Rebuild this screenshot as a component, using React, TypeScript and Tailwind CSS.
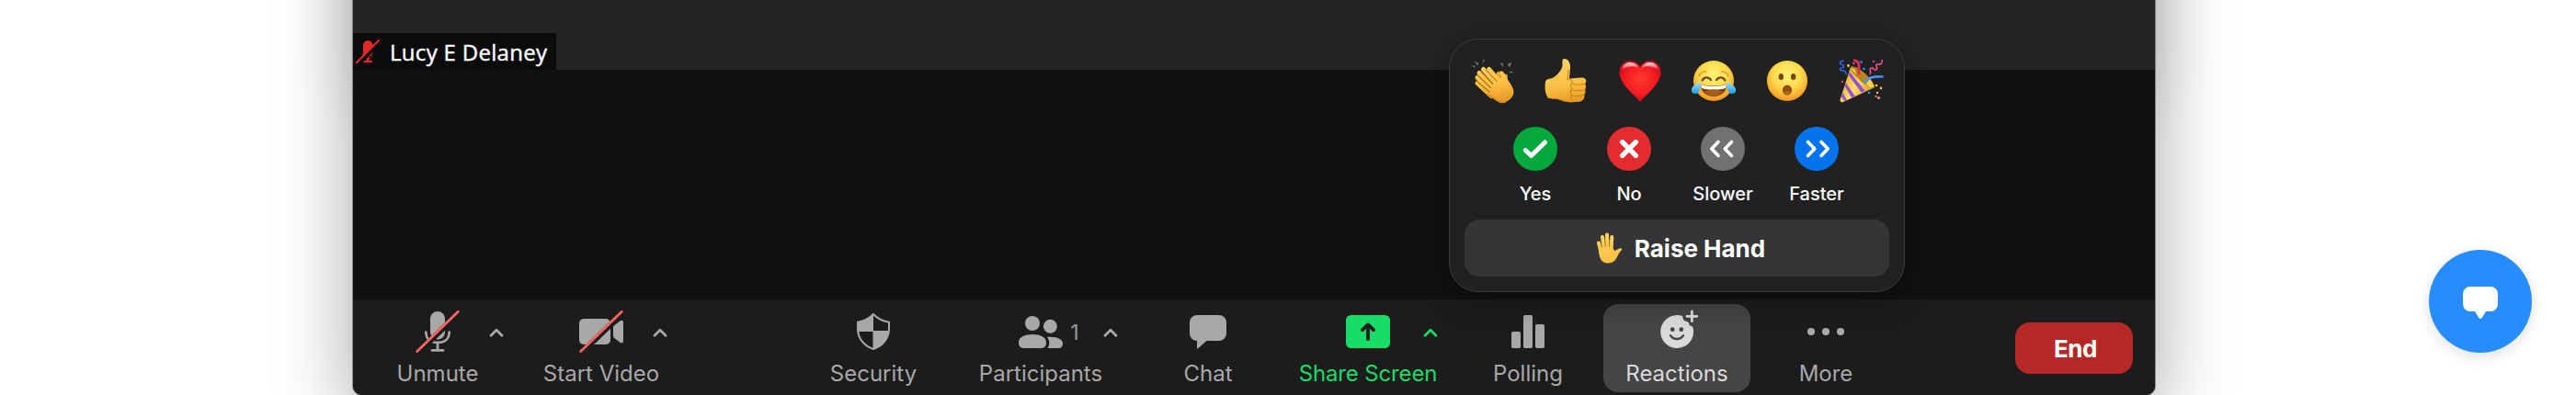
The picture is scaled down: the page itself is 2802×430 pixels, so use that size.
import type { ReactNode } from "react";

const GRAY = "#a8a8a8";

function Slash({ gap }: { gap: string }) {
  return (
    <>
      <path d="M9 49.5 54 6" stroke={gap} strokeWidth="6" />
      <path d="M7.7 48.6 52.3 5.2" stroke="#ff6363" strokeWidth="2.8" strokeLinecap="round" />
    </>
  );
}

function Icon({ children }: { children: ReactNode }) {
  return (
    <svg width="60" height="56" viewBox="0 0 60 56" fill="none" className="block">
      {children}
    </svg>
  );
}

const MicIcon = () => (
  <Icon>
    <rect x="22" y="5" width="16" height="30.5" rx="8" fill={GRAY} />
    <path d="M17.3 27.5C17.3 35 22.3 39 30 39s12.7-4 12.7-11.5" stroke={GRAY} strokeWidth="2.7" strokeLinecap="round" />
    <path d="M30 39v8.4M24 47.4h12" stroke={GRAY} strokeWidth="2.8" strokeLinecap="round" />
    <Slash gap="#1c1c1c" />
  </Icon>
);

const VideoIcon = () => (
  <Icon>
    <rect x="6" y="13" width="34" height="28" rx="5" fill={GRAY} />
    <path d="M43 22.6c0-1 .4-1.8 1.1-2.4l6.6-5c1.4-1 3.3-.3 3.3 1.4v21c0 1.7-1.9 2.4-3.3 1.4l-6.6-5c-.7-.6-1.1-1.4-1.1-2.4Z" fill={GRAY} />
    <Slash gap="#1c1c1c" />
  </Icon>
);

const ShieldIcon = () => (
  <Icon>
    <path d="M30 8c4.5 4.8 10.5 7.7 17 8.700v7C47 34 40.5 42.500 30 46 19.500 42.500 13 34 13 23.700v-7C19.500 15.700 25.500 12.800 30 8Z" stroke={GRAY} strokeWidth="2" />
    <path d="M30 8v18.500H13.200L13 17c6.500-1 12.500-4.200 17-9ZM30 26.500h16.800C46.200 36 40 43 30 46Z" fill={GRAY} />
    <path d="M30 26.500h17M30 26v20M13 26.500h17" stroke={GRAY} strokeWidth="1" />
  </Icon>
);

const PeopleIcon = () => (
  <Icon>
    <circle cx="21" cy="18" r="8" fill={GRAY} />
    <path d="M6 38.500C6 33 12.500 30 21 30s15 3 15 8.500c0 4.500-2 6.500-5.500 6.500h-19C8 45 6 43 6 38.500Z" fill={GRAY} />
    <circle cx="40.400" cy="21.300" r="7.500" fill={GRAY} />
    <path d="M37 32.900c9.500-1 17 1.800 17 7.100 0 3.500-1.800 5-4.800 5H37.500c2.700-4.200 2.300-8.500-.5-12.100Z" fill={GRAY} />
  </Icon>
);

const ChatIcon = () => (
  <Icon>
    <path d="M18 9h24a8 8 0 0 1 8 8v12a8 8 0 0 1-8 8H28.500l-9 8.100c-.7.600-1.500.2-1.500-.6V37a8 8 0 0 1-8-8V17a8 8 0 0 1 8-8Z" fill={GRAY} />
  </Icon>
);

const ShareIcon = () => (
  <Icon>
    <rect x="6" y="9" width="48" height="36" rx="5.500" fill="#17dc68" />
    <path d="M30 35V20M24 25.200l6-5.800 6 5.800" stroke="#1c1c1c" strokeWidth="3.800" strokeLinecap="round" strokeLinejoin="round" />
  </Icon>
);

const PollIcon = () => (
  <Icon>
    <rect x="12" y="27" width="10" height="18" rx="1.800" fill={GRAY} />
    <rect x="25" y="9" width="10" height="36" rx="1.800" fill={GRAY} />
    <rect x="38" y="19" width="10" height="26" rx="1.800" fill={GRAY} />
  </Icon>
);

const ReactionIcon = () => (
  <Icon>
    <path d="M36 10A18 18 0 1 0 47.600 22.600C46 20 44.500 21.500 43.500 19.500 43.300 17 42 15.800 39 15.500 36.500 14.500 36.800 12.500 36 10Z" fill="#dadada" />
    <path d="M46.400 4.800v11M40.900 10.300h11" stroke="#dadada" strokeWidth="2.800" strokeLinecap="round" />
    <circle cx="25.200" cy="24.700" r="2.400" fill="#454545" />
    <circle cx="34.800" cy="24.700" r="2.400" fill="#454545" />
    <path d="M23 31.200c3.500 5 10.500 5 14 0" stroke="#454545" strokeWidth="2.400" strokeLinecap="round" />
  </Icon>
);

const MoreIcon = () => (
  <Icon>
    <circle cx="14" cy="27" r="4.100" fill={GRAY} />
    <circle cx="30" cy="27" r="4.100" fill={GRAY} />
    <circle cx="46" cy="27" r="4.100" fill={GRAY} />
  </Icon>
);

const Chevron = ({ color = GRAY }: { color?: string }) => (
  <svg width="16" height="12" viewBox="0 0 16 12" fill="none">
    <path d="M2 9.300 8 3.200l6 6.100" stroke={color} strokeWidth="2.800" strokeLinecap="round" strokeLinejoin="round" />
  </svg>
);

function ToolButton({
  icon,
  label,
  side,
  className = "",
  labelClass = "",
}: {
  icon: ReactNode;
  label: string;
  side?: ReactNode;
  className?: string;
  labelClass?: string;
}) {
  return (
    <button
      className={`mt-[5px] grid h-24 shrink-0 grid-cols-[1fr_60px_1fr] grid-rows-[60px_36px] ${className || "w-40 text-[#a8a8a8]"}`}
    >
      <span />
      <span className="pt-[3px]">{icon}</span>
      <span className="flex h-[59px] items-center pt-[3px]">{side}</span>
      <span className={`col-span-3 flex justify-center whitespace-nowrap text-[24px] leading-[32px] ${labelClass}`}>
        {label}
      </span>
    </button>
  );
}

/* ---------- emoji ---------- */

function Emoji({ children }: { children: ReactNode }) {
  return (
    <svg width="48" height="48" viewBox="0 0 48 48" fill="none" className="block overflow-visible">
      {children}
    </svg>
  );
}

const Clap = () => (
  <Emoji>
    <g fill="#777">
      <path d="m3.500 2.500 5 2.500-1 2.500ZM.3 7.500l4.200.2-.5 2ZM13.500.500l1.500 1-2.500 4Z" />
      <path d="m44 3.500-1.500 5.500-3-2.500ZM45.200 13.500v2l-4.500-1ZM31.800 4.500l3.200.5-.5 4Z" />
    </g>
    <path d="M28 15c2-2 4-.5 4.500 2l1 4c2-4 5-5.500 6-3.500 1 2-.5 5 0 8 .8 5 7 9 6.500 13.500L40 46l-16-14Z" fill="#efa42d" />
    <path d="M28 15c2-2 4-.5 4.500 2l1 5 4 6" stroke="#c17a18" strokeWidth=".8" />
    <g stroke="url(#skin)" strokeWidth="5" strokeLinecap="round">
      <path d="m19.500 11.500 15 17" />
      <path d="m13.500 11.500 18 20" />
      <path d="m9 15.500 19 20" />
      <path d="m7 20.500 18 18" />
      <path d="m7 26.500 15 14" />
    </g>
    <path d="m17 28 16-7c.5-3-3-5-1.500-7 1.500-1.800 4.500.5 6 4 2.500 6 9.500 13 9 19-.3 4-5 9-10 10-6 1-12-4-18-9Z" fill="url(#skin)" />
    <path d="m16.500 12 11.500 12.500M11 14l13 13.500M7.500 18l14 13.500M6 24l14 12" stroke="#b06c14" strokeWidth="1.100" strokeLinecap="round" />
    <path d="m17.500 38 10 7c4 3 8 3 11 1.500" stroke="#d58a1e" strokeWidth="1.500" />
  </Emoji>
);

const ThumbsUp = () => (
  <Emoji>
    <path
      d="M1 25c1-3 3-3 6-3.500 5-1 12-9 12.500-14C19.800 3 18.500 0 21.500 0c4.500 0 7 5 6.500 10.500L27 21c0 2 15-2.500 17.500 1 1.200 1.500 1 4-.5 5.500 1.500 2 1.300 4.500 0 6 1 2 .8 4-.8 5.300.8 3-.2 5.500-2.200 6.700-2 1.800-7 1.700-12 1.500-6-.2-11.500-3.500-16-3.500-5 0-8.500 0-10-2.500-2.500-4-2.800-11-2-16Z"
      fill="url(#skin)"
    />
    <path d="M31 27.500c4.500 1 9 1 13-.2M30.500 34c4 1 9.500.8 13.500-.3M30 40c4 .9 9.500.6 13-.8M26 22c2 .5 4 1.500 4.500 4-2.500 1-2.800 4-.5 6.500-2 1.500-2 4.500-.3 6.500-1.500 1.500-1 4.500.3 6.500M26 12l-1 11" stroke="#c98520" strokeWidth="1.100" strokeLinecap="round" />
    <path d="M3 42c5 2 8 0 13 2s10 4 22 2" stroke="#e2951f" strokeWidth="1.200" />
  </Emoji>
);

const Heart = () => (
  <Emoji>
    <path d="M24 47C18 39 1.500 28 1.500 14.500 1.500 7 7 2.300 13 2.300c5 0 9 2.700 11 7.200 2-4.500 6-7.200 11-7.200 6 0 11.500 4.700 11.500 12.200C46.500 28 30 39 24 47Z" fill="url(#heart)" />
    <path d="M4 12C5 6.500 9 4 13 4c4 0 7.500 2 9 5.500-4-2-12-2-18 2.500ZM44 12c-1-5.500-5-8-9-8-4 0-7.500 2-9 5.500 4-2 12-2 18 2.500Z" fill="url(#shine)" />
  </Emoji>
);

const Joy = () => (
  <Emoji>
    <circle cx="24" cy="24" r="22" fill="url(#face)" />
    <path d="M8 19c1-3.500 4.500-5.500 8-5M40 19c-1-3.500-4.500-5.500-8-5" stroke="#d1922a" strokeWidth="1.300" strokeLinecap="round" />
    <path d="M11.500 23.500c2.500-4 7-4 9.500-.3M27 23.200c2.500-3.700 7-3.700 9.500.3" stroke="#7b4510" strokeWidth="2.200" strokeLinecap="round" />
    <path d="M9.500 27.500c9 2.500 20 2.500 29 0C38.500 35.500 32.500 41 24 41S9.500 35.500 9.500 27.500Z" fill="#79420f" />
    <path d="M10 28c9 2.500 19 2.500 28 0l-.8 4c-8 2-18.500 2-26.400 0Z" fill="#fff" />
    <path d="M14 36c5-3 15-3 20 0-5 6-15 6-20 0Z" fill="#a85b18" />
    <path d="M9 24.500c1 5 .8 13.500-5 13.500-3.500 0-5-3-3.700-6C1.500 29 6 27.500 9 24.500ZM39 24.500c-1 5-.8 13.500 5 13.500 3.500 0 5-3 3.700-6C46.500 29 42 27.500 39 24.500Z" fill="url(#tear)" />
  </Emoji>
);

const Wow = () => (
  <Emoji>
    <circle cx="24" cy="24" r="22" fill="url(#face)" />
    <ellipse cx="17.300" cy="19.500" rx="2.700" ry="3.500" fill="#7b4510" />
    <ellipse cx="30.700" cy="19.500" rx="2.700" ry="3.500" fill="#7b4510" />
    <ellipse cx="24" cy="34" rx="5" ry="5.600" fill="#8d4d10" />
    <path d="M20.500 36.500c1.500-2 5.500-2 7 0-1.500 3-5.500 3-7 0Z" fill="#b4691d" />
  </Emoji>
);

const Party = () => (
  <Emoji>
    <path d="M13 9c2-2 9 1 16 7.500 7 6.500 11 13 9.500 15L5 47c-2 1-4-.8-3.300-3Z" fill="url(#cone)" />
    <path d="M13 9c2-2 9 1 16 7.500s11 13 9.500 15c-2 1.500-9-2-16-8.500S11.500 11 13 9Z" fill="#b98518" />
    <path d="m10.800 18 14 18.800 4-1.900L12 14.200ZM6.700 30l7.300 12.300 3.700-1.700L7.900 26.300ZM2.900 41l3.500 5.200 2.600-1.200-4.700-8.400Z" fill="#9950d8" />
    <path d="m12.500 10 5 1.500 2 5.500-5-5ZM34 22l4.500 8-4 1.500-5-4Z" fill="#f7d458" />
    <path d="M16 2c4-1 6.500 3 6 7.500-.2 3-.2 5 0 8" stroke="#e62d5f" strokeWidth="2.800" />
    <path d="M28 25c5-5 10-6 19.500-5.500" stroke="#4792ff" strokeWidth="2.700" strokeLinecap="round" />
    <path d="M5.500 2C1 2 0 6 4 6.500c2 .4 2.500 3-1 3.700C0 11 2 13.500 5 13s3 2.500 3.500 4.500" stroke="#2b6cf0" strokeWidth="1.500" />
    <path d="M47 1c1 3.500-1 5.500-4 5-2.500-.3-2.800 1.500-1.500 3.500 1.300 2-2 3.500-3.500 1.500-2-2.500-4.500-.5-3.500 2 .5 1.500.2 3-.8 4" stroke="#f05296" strokeWidth="1.600" />
    <g>
      <circle cx="10.500" cy="7.500" r="1.400" fill="#f7d14a" />
      <circle cx="16.500" cy="5" r="1.200" fill="#ec4b8a" />
      <circle cx="24.500" cy="3.500" r="1.300" fill="#3f8cff" />
      <circle cx="27.500" cy="11" r="1.300" fill="#3f8cff" />
      <circle cx="38" cy="3" r="1.200" fill="#ec3d6b" />
      <circle cx="4" cy="25" r="1.200" fill="#ec3d6b" />
      <circle cx="41" cy="29" r="1.300" fill="#f7d14a" />
      <circle cx="46" cy="32" r="1.400" fill="#ffab3a" />
      <circle cx="33" cy="37" r="1.300" fill="#3f8cff" />
      <circle cx="42" cy="37" r="1.300" fill="#ffab3a" />
      <circle cx="40.500" cy="41" r="1.100" fill="#ffab3a" />
      <circle cx="43.500" cy="42.500" r="1.600" fill="#ff7db5" />
    </g>
  </Emoji>
);

const Hand = () => (
  <svg width="30" height="34" viewBox="0 0 30 34" fill="none" className="block">
    <g stroke="url(#skin)" strokeWidth="4" strokeLinecap="round">
      <path d="M3 11.500 5.500 22" />
      <path d="m7 5 2 14" />
      <path d="m12 2.500.5 15" />
      <path d="M17.300 5 16.500 19" />
    </g>
    <path d="M3 17c5-2 11-2 15 0 1 0 1.500 3 2.500 3 1.500-.5 4.500-3.500 7-2.700 1.200.4.800 1.800-.3 2.700-4 3.500-4.700 13.500-13.700 13.500C5 33.500 3 27 3 17Z" fill="url(#skin)" />
    <path d="M5.200 12.500 6.500 17M9.700 8l.5 8M14.700 8v8" stroke="#cc8420" strokeWidth=".8" />
  </svg>
);

const EmojiPaints = () => (
  <svg width="0" height="0" className="absolute">
    <defs>
      <linearGradient id="skin" gradientUnits="userSpaceOnUse" x1="10" y1="0" x2="20" y2="48">
        <stop offset="0" stopColor="#ffd264" />
        <stop offset=".6" stopColor="#fcc246" />
        <stop offset="1" stopColor="#e99a26" />
      </linearGradient>
      <radialGradient id="heart" cx=".5" cy=".45" r=".6">
        <stop offset="0" stopColor="#ff3a2e" />
        <stop offset=".6" stopColor="#f41c20" />
        <stop offset="1" stopColor="#c40a14" />
      </radialGradient>
      <linearGradient id="shine" x1="0" y1="0" x2="0" y2="1">
        <stop offset="0" stopColor="#fff" stopOpacity=".85" />
        <stop offset="1" stopColor="#fff" stopOpacity=".1" />
      </linearGradient>
      <radialGradient id="face" cx=".5" cy=".35" r=".66">
        <stop offset="0" stopColor="#fff27a" />
        <stop offset=".5" stopColor="#ffdc4c" />
        <stop offset=".85" stopColor="#f9ab2e" />
        <stop offset="1" stopColor="#ec8c1c" />
      </radialGradient>
      <linearGradient id="tear" x1="0" y1="0" x2="0" y2="1">
        <stop offset="0" stopColor="#a5e6ff" />
        <stop offset="1" stopColor="#1c9bea" />
      </linearGradient>
      <linearGradient id="cone" x1="0" y1=".3" x2="1" y2=".8">
        <stop offset="0" stopColor="#d9a32c" />
        <stop offset=".45" stopColor="#ffe169" />
        <stop offset="1" stopColor="#c58d1e" />
      </linearGradient>
    </defs>
  </svg>
);

function Feedback({ color, label, labelClass, path, width }: { color: string; label: string; labelClass: string; path: string; width: number }) {
  return (
    <button className="flex w-[102px] flex-col items-center">
      <svg width="48" height="48" viewBox="0 0 48 48" fill="none">
        <circle cx="24" cy="24" r="24" fill={color} />
        <path d={path} stroke="#fff" strokeWidth={width} strokeLinecap="round" strokeLinejoin="round" />
      </svg>
      <span className={`mt-[13px] whitespace-nowrap text-[20px] font-medium leading-[24px] text-white ${labelClass}`}>{label}</span>
    </button>
  );
}

function ReactionsPopup() {
  return (
    <section className="absolute left-[1192px] top-[42px] h-[276px] w-[496px] rounded-[32px] border border-[#3c3c3c] bg-[#212121] pt-[21px] shadow-[0_6px_36px_rgba(0,0,0,0.35)]">
      <div className="flex justify-center gap-8">
        <Clap />
        <ThumbsUp />
        <Heart />
        <Joy />
        <Wow />
        <Party />
      </div>
      <div className="mt-[26px] flex justify-center pr-0.5">
        <Feedback color="#04a83c" label="Yes" labelClass="" path="m13.300 25.500 6.200 6L34.500 17" width={5} />
        <Feedback color="#e22c2d" label="No" labelClass="" path="m16.700 16.700 14.600 14.600m0-14.600L16.700 31.300" width={5.400} />
        <Feedback color="#717171" label="Slower" labelClass="" path="m19 16.500-7.200 7.500 7.200 7.500m14.500-15L26.300 24l7.200 7.500" width={3.600} />
        <Feedback color="#0473ed" label="Faster" labelClass="" path="m14.500 16.500 7.200 7.500-7.200 7.500m14.500-15 7.200 7.500-7.200 7.500" width={3.600} />
      </div>
      <button className="mx-4 mt-4 flex h-[62px] w-[462px] items-center justify-center rounded-2xl bg-[#353535] pl-2">
        <Hand />
        <span className="ml-[12px] whitespace-nowrap pt-px text-[26px] font-bold leading-[32px] text-white">Raise Hand</span>
      </button>
    </section>
  );
}

export default function App() {
  return (
    <main
      className="relative h-[430px] w-[2802px] overflow-hidden bg-white pl-[384px]"
      style={{ fontFamily: 'Inter, "Liberation Sans", sans-serif' }}
    >
      <EmojiPaints />
      <div className="relative -mt-[400px] flex h-[830px] w-[1960px] flex-col rounded-[10px] bg-[#111] pt-[400px] shadow-[0_0_0_1px_rgba(0,0,0,0.35),0_24px_84px_rgba(0,0,0,0.36),0_-320px_64px_rgba(0,0,0,0.12)]">
        <div className="h-[76px] bg-[#242424] pt-9">
          <div className="flex h-10 w-[221px] items-center bg-[#0b0b0b]">
            <svg width="32" height="40" viewBox="0 0 32 40" fill="none">
              <rect x="11" y="8" width="10.500" height="18" rx="5.200" fill="#e02828" />
              <path d="M10 21c0 9 12.500 9 12.500 0l-1 5-5.500 3.500ZM14.500 26h3v5h-3ZM11 30h10v2H11Z" fill="#e02828" />
              <path d="M5 34.500 30 9.500" stroke="#0b0b0b" strokeWidth="4.500" />
              <path d="M3.800 32.300 28 8" stroke="#e02828" strokeWidth="2" strokeLinecap="round" />
            </svg>
            <span
              className="ml-[8px] whitespace-nowrap pt-0.5 text-[24px] font-medium leading-[40px] tracking-[0.3px] text-white"
              style={{ fontFamily: '"Open Sans", "Noto Sans", sans-serif', WebkitTextStroke: "0.4px white" }}
            >
              Lucy E Delaney
            </span>
          </div>
        </div>
        <div className="h-[250px]" />
        <nav className="flex h-[104px] items-start rounded-b-[10px] bg-[#1c1c1c] pl-3">
          <ToolButton icon={<MicIcon />} label="Unmute" side={<span className="ml-[26px]"><Chevron /></span>} />
          <ToolButton className="ml-[18px] w-40 text-[#a8a8a8]" icon={<VideoIcon />} label="Start Video" side={<span className="ml-[26px]"><Chevron /></span>} />
          <ToolButton className="ml-[136px] w-40 text-[#a8a8a8]" icon={<ShieldIcon />} label="Security" />
          <ToolButton
            className="ml-[18px] w-[168px] text-[#a8a8a8]"
            icon={<PeopleIcon />}
            label="Participants"
            side={
              <>
                <span className="w-[12px] pl-0.5 text-[23px] leading-none text-[#989898]">1</span>
                <span className="ml-[26px]"><Chevron /></span>
              </>
            }
          />
          <ToolButton className="ml-[18px] w-40 text-[#a8a8a8]" icon={<ChatIcon />} label="Chat" />
          <ToolButton className="ml-[14px] w-40 text-[#17dc68]" labelClass="tracking-[-0.15px]" icon={<ShareIcon />} label="Share Screen" side={<span className="ml-[30px]"><Chevron color="#17dc68" /></span>} />
          <ToolButton className="ml-[14px] w-40 text-[#a8a8a8]" icon={<PollIcon />} label="Polling" />
          <ToolButton className="ml-[2px] w-40 rounded-2xl bg-[#454545] text-[#dadada]" icon={<ReactionIcon />} label="Reactions" />
          <ToolButton className="ml-[2px] w-40 text-[#a8a8a8]" icon={<MoreIcon />} label="More" />
          <button className="ml-[126px] mt-[25px] h-14 w-32 rounded-2xl bg-[#b62727] pl-[3px] text-[26px] font-bold tracking-[-0.4px] text-white">End</button>
        </nav>
        <div className="absolute left-0 top-[400px]">
          <ReactionsPopup />
        </div>
      </div>
      <button className="absolute left-[2642px] top-[272px] flex h-28 w-28 items-center justify-center rounded-full bg-[#278dff] shadow-[0_4px_16px_rgba(0,0,0,0.13)]">
        <svg width="38" height="36" viewBox="0 0 38 36" fill="none" className="mt-1">
          <path d="M8 0h22a8 8 0 0 1 8 8v11a8 8 0 0 1-8 8h-5l-4.500 7.200c-.7 1-2.300 1-3 0L13 27H8a8 8 0 0 1-8-8V8a8 8 0 0 1 8-8Z" fill="#fff" />
        </svg>
      </button>
    </main>
  );
}
